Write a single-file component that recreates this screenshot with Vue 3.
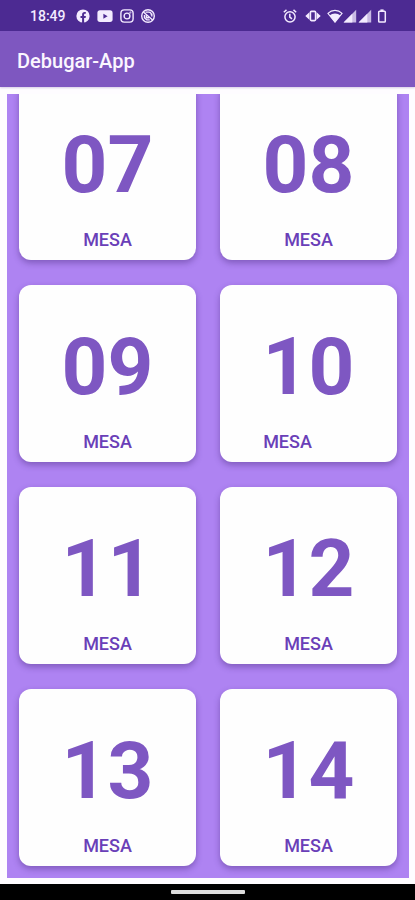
<script setup>
const tables = ['07', '08', '09', '10', '11', '12', '13', '14']
</script>

<template>
  <div class="screen">
    <div class="status">
      <div class="group">
        <time class="clock">18:49</time>
        <svg class="icon" viewBox="0 0 14 14" aria-hidden="true">
          <circle cx="7" cy="7" r="6.6" fill="currentColor" />
          <path d="M6.1 14V9H4.5V7h1.6V5.6c0-1.7.9-2.6 2.5-2.6h1.2v1.7H9c-.7 0-.9.4-.9 1V7h1.8l-.3 2H8.1v5z" fill="#4c2a92" />
        </svg>
        <svg class="icon wide" viewBox="0 0 16 14" aria-hidden="true">
          <rect x="0.4" y="1.3" width="15.2" height="11.6" rx="2.6" fill="currentColor" />
          <path d="M6.4 4.7v5l4.2-2.5z" fill="#4c2a92" />
        </svg>
        <svg class="icon" viewBox="0 0 14 14" fill="none" stroke="currentColor" stroke-width="1.4" aria-hidden="true">
          <rect x="0.9" y="0.9" width="12.2" height="12.2" rx="3.4" />
          <circle cx="7" cy="7" r="2.9" />
          <circle cx="10.4" cy="3.6" r="0.3" />
        </svg>
        <svg class="icon last" viewBox="0 0 14 14" fill="none" stroke="currentColor" stroke-width="1.4" aria-hidden="true">
          <circle cx="7" cy="7" r="6.3" />
          <path d="M2.4 3 11.6 11M4.6 3.1h3.2a2.6 2.6 0 0 1 2.5 3.3M10.8 4.4v3.2M3.5 6v2.8l2.3 2.1h3" />
          <path d="M5.4 6.2v2.6h2.8" />
        </svg>
      </div>
      <div class="group">
        <svg class="icon alarm" viewBox="0 0 14 14" fill="none" stroke="currentColor" stroke-width="1.5" aria-hidden="true">
          <circle cx="7" cy="7.8" r="5.1" />
          <path d="M6.8 4.8v3.3l2.2 1.7M.8 3.2 3.5.9M13.2 3.2 10.5.9" />
        </svg>
        <svg class="icon wide vibrate" viewBox="0 0 16 14" aria-hidden="true">
          <rect x="5.4" y="2.4" width="5.2" height="9.2" rx="1" fill="none" stroke="currentColor" stroke-width="1.6" />
          <path d="M4.4 3.2v7.6L.3 7zM11.6 3.2v7.6L15.7 7z" fill="currentColor" />
        </svg>
        <svg class="icon wide" viewBox="0 0 16 14" aria-hidden="true">
          <path d="M8 13.2.9 4.3C2.8 2.5 5.3 1.4 8 1.4s5.2 1.1 7.1 2.9z" fill="none" stroke="currentColor" stroke-width="1.1" />
          <path d="M8 13.4 2.6 6.6C4 5.3 6 4.6 8 4.6s4 .7 5.4 2z" fill="currentColor" />
        </svg>
        <svg class="icon" viewBox="0 0 14 14" aria-hidden="true">
          <path d="M.6 13.4 13.2.8v12.6z" fill="currentColor" opacity="0.75" />
          <path d="M.6 13.4 9.3 4.7v8.7z" fill="currentColor" />
        </svg>
        <svg class="icon signal" viewBox="0 0 14 14" aria-hidden="true">
          <path d="M.6 13.4 13.2.8v12.6z" fill="currentColor" opacity="0.75" />
          <path d="M.6 13.4 9.3 4.7v8.7z" fill="currentColor" />
        </svg>
        <svg class="icon battery" viewBox="0 0 10 14" aria-hidden="true">
          <rect x="1.7" y="2.3" width="6.6" height="10.8" rx="0.8" fill="none" stroke="currentColor" stroke-width="1.5" />
          <path d="M3.4.4h3.2v2H3.4z" fill="currentColor" />
        </svg>
      </div>
    </div>

    <header class="bar">
      <h1>Debugar-App</h1>
    </header>

    <main class="panel">
      <div class="grid">
        <article v-for="n in tables" :key="n" class="card" :class="{ shifted: n === '10' }">
          <span class="number">{{ n }}</span>
          <span class="label">MESA</span>
        </article>
      </div>
    </main>

    <footer class="nav"><span class="handle"></span></footer>
  </div>
</template>

<style>
body {
  background: #fefcff;
}
</style>

<style scoped>
.screen {
  display: flex;
  flex-direction: column;
  height: 100vh;
  font-family: Roboto, "Liberation Sans", sans-serif;
}

.status {
  display: flex;
  flex: none;
  align-items: center;
  justify-content: space-between;
  box-sizing: border-box;
  height: 31px;
  padding: 1px 28px 0 30px;
  background: #4c2a92;
  color: #f3ebff;
}

.group {
  display: flex;
  align-items: center;
}

.clock {
  margin-right: 10px;
  font-size: 14px;
  font-weight: 500;
  line-height: 16px;
}

.icon {
  width: 14px;
  height: 14px;
  margin-right: 7px;
}

.icon.wide {
  width: 16px;
}

.icon.last,
.group:last-child .icon {
  margin-right: 0;
}

.group:last-child .alarm {
  margin-right: 8px;
}

.group:last-child .vibrate {
  margin-right: 6px;
}

.group:last-child .signal {
  margin: 0 5px 0 1px;
}

.icon.battery {
  width: 10px;
}

.bar {
  display: flex;
  flex: none;
  align-items: center;
  height: 56px;
  padding: 3px 17px 0;
  box-sizing: border-box;
  background: #7e57c0;
  box-shadow: 0 1px 2px rgba(90, 60, 150, 0.25);
}

h1 {
  margin: 0;
  color: #fbf6ff;
  font-size: 20px;
  font-weight: 500;
  line-height: 24px;
}

.panel {
  display: flex;
  flex: 1;
  flex-direction: column;
  justify-content: flex-end;
  min-height: 0;
  margin: 7px 6px 6px 7px;
  overflow: hidden;
  background: #ae83f2;
}

.grid {
  display: grid;
  grid-template-columns: 1fr 1fr;
  gap: 25px 24px;
  padding: 12px;
}

.card {
  display: flex;
  flex-direction: column;
  align-items: center;
  box-sizing: border-box;
  aspect-ratio: 1;
  padding-top: 34px;
  border-radius: 12px;
  background: #fefefe;
  box-shadow: 0 3px 6px rgba(60, 30, 110, 0.4);
}

.number {
  color: #7e57c2;
  font-size: 80px;
  font-weight: 700;
  line-height: 96px;
}

.label {
  margin-top: 15px;
  color: #6a3fb8;
  font-size: 18px;
  font-weight: 500;
  line-height: 24px;
}

.shifted .label {
  padding-right: 42px;
}

.nav {
  display: flex;
  flex: none;
  align-items: center;
  justify-content: center;
  height: 16px;
  background: #000;
}

.handle {
  width: 74px;
  height: 4px;
  border-radius: 1px;
  background: #dcdcdc;
}
</style>
